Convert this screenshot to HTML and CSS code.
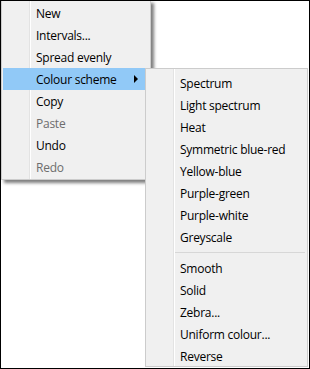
FILE: index.html
```html
<!DOCTYPE html>
<html lang="en">
<head>
    <meta charset="UTF-8">
    <meta name="viewport" content="width=device-width, initial-scale=1.0">
    <title>Colour scheme menu</title>
    <link rel="stylesheet" href="styles.css">
</head>
<body>
    <div class="screen">
        <div class="menu main-menu">
            <div class="item"><span class="label">New</span></div>
            <div class="item"><span class="label">Intervals...</span></div>
            <div class="item"><span class="label">Spread evenly</span></div>
            <div class="item active"><span class="label">Colour scheme</span><span class="arrow"></span></div>
            <div class="item"><span class="label">Copy</span></div>
            <div class="item disabled"><span class="label">Paste</span></div>
            <div class="item"><span class="label">Undo</span></div>
            <div class="item disabled"><span class="label">Redo</span></div>
        </div>

        <div class="menu sub-menu">
            <div class="item"><span class="label">Spectrum</span></div>
            <div class="item"><span class="label">Light spectrum</span></div>
            <div class="item"><span class="label">Heat</span></div>
            <div class="item"><span class="label">Symmetric blue-red</span></div>
            <div class="item"><span class="label">Yellow-blue</span></div>
            <div class="item"><span class="label">Purple-green</span></div>
            <div class="item"><span class="label">Purple-white</span></div>
            <div class="item"><span class="label">Greyscale</span></div>
            <div class="separator"></div>
            <div class="item"><span class="label">Smooth</span></div>
            <div class="item"><span class="label">Solid</span></div>
            <div class="item"><span class="label">Zebra...</span></div>
            <div class="item"><span class="label">Uniform colour...</span></div>
            <div class="item"><span class="label">Reverse</span></div>
        </div>
    </div>
</body>
</html>
```

FILE: styles.css
```css
body {
    margin: 0;
    font-family: 'Segoe UI', 'Open Sans', 'Noto Sans', sans-serif;
    font-size: 12px;
    letter-spacing: -0.25px;
    color: #000;
}
.screen {
    position: relative;
    width: 308px;
    height: 367px;
    border: 1px solid #000;
    background: #fff;
    overflow: hidden;
}

/* popup menus */
.menu {
    position: absolute;
    box-sizing: border-box;
    background: #f0f0f0;
    border: 1px solid #ccc;
    padding: 1px;
}
.menu::before {
    content: '';
    position: absolute;
    top: 0;
    bottom: 0;
    left: 27px;
    width: 1px;
    background: #e3e3e3;
    border-right: 1px solid #fff;
}
.main-menu {
    left: 0;
    top: -1px;
    width: 150px;
    box-shadow: 3px 3px 3px 0 rgba(0, 0, 0, 0.5);
}
.sub-menu {
    left: 144px;
    top: 67px;
    width: 163px;
    height: 299px;
    padding-top: 3px;
    overflow: hidden;
}

.item {
    position: relative;
    display: flex;
    align-items: center;
    height: 22px;
    padding-left: 33px;
    white-space: nowrap;
}
.item.active { background: #91c9f7; }
.item.disabled { color: #6d6d6d; }
.arrow {
    margin-left: auto;
    margin-right: 11px;
    width: 0;
    height: 0;
    border-style: solid;
    border-width: 4px 0 4px 4px;
    border-color: transparent transparent transparent #000;
}
.separator {
    position: relative;
    height: 9px;
    margin-left: 28px;
    margin-right: 1px;
    background: linear-gradient(#d7d7d7, #d7d7d7) 0 4px / 100% 1px no-repeat;
}
```
